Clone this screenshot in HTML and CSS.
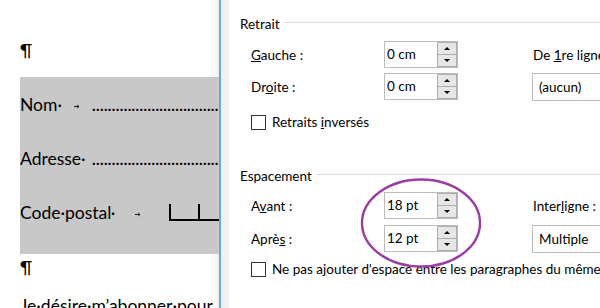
FILE: index.html
```html
<!DOCTYPE html>
<html lang="fr">
<head>
<meta charset="utf-8">
<title>Paragraphe</title>
<link rel="stylesheet" href="styles.css">
</head>
<body>
<div class="app">
  <div class="doc">
    <p class="para pil-top">¶</p>
    <div class="shade">
      <div class="line">
        <span class="lab lab-short">Nom·<svg class="tab" viewBox="0 0 6 5" width="6" height="5"><path d="M0 2.5H5M3.2 1L5 2.5 3.2 4" fill="none" stroke="#000" stroke-width="0.9"/></svg></span>
        <span class="leader">..................................................</span>
      </div>
      <div class="line">
        <span class="lab lab-short">Adresse·</span>
        <span class="leader">..................................................</span>
      </div>
      <div class="line">
        <span class="lab lab-long">Code·postal·<svg class="tab tab-code" viewBox="0 0 6 5" width="6" height="5"><path d="M0 2.5H5M3.2 1L5 2.5 3.2 4" fill="none" stroke="#000" stroke-width="0.9"/></svg></span>
        <span class="postal"><span class="postal-cell"></span></span>
      </div>
    </div>
    <p class="para pil-bottom">¶</p>
    <p class="para sentence">Je·désire·m’abonner·pour</p>
  </div>

  <div class="dialog">
    <div class="strip"></div>
    <div class="content">
      <section class="group group-retrait">
        <div class="legend"><span>Retrait</span><span class="rule"></span></div>
        <div class="grid">
          <span class="label"><u>G</u>auche :</span>
          <div class="spin"><span class="val">0 cm</span><span class="btns"><span class="btn"><i class="up"></i></span><span class="btn"><i class="down"></i></span></span></div>
          <span class="gap"></span>
          <span class="label label-right">De <u>1</u>re ligne :</span>

          <span class="label">Dr<u>o</u>ite :</span>
          <div class="spin"><span class="val">0 cm</span><span class="btns"><span class="btn"><i class="up"></i></span><span class="btn"><i class="down"></i></span></span></div>
          <span class="gap"></span>
          <div class="select">(aucun)</div>
        </div>
        <label class="check check-retrait"><span class="box"></span><span class="check-text">Retraits <u>i</u>nversés</span></label>
      </section>

      <section class="group group-espace">
        <div class="legend"><span>Espacement</span><span class="rule"></span></div>
        <div class="grid grid-espace">
          <span class="label">A<u>v</u>ant :</span>
          <div class="spin"><span class="val">18 pt</span><span class="btns"><span class="btn"><i class="up"></i></span><span class="btn"><i class="down"></i></span></span></div>
          <span class="gap"></span>
          <span class="label label-right">Inter<u>l</u>igne :</span>

          <span class="label">Aprè<u>s</u> :</span>
          <div class="spin"><span class="val">12 pt</span><span class="btns"><span class="btn"><i class="up"></i></span><span class="btn"><i class="down"></i></span></span></div>
          <span class="gap"></span>
          <div class="select">Multiple</div>
        </div>
        <label class="check check-espace"><span class="box"></span><span class="check-text">Ne pas a<u>j</u>outer d'espace entre les paragraphes du même style</span></label>
      </section>
    </div>
  </div>

  <svg class="circle" width="124" height="92" viewBox="0 0 124 92"><ellipse cx="62" cy="46" rx="59" ry="43.5" fill="none" stroke="#9a3ea3" stroke-width="2.4"/></svg>
</div>
</body>
</html>
```
FILE: styles.css
```css
html, body {
  margin: 0;
  padding: 0;
  width: 600px;
  height: 308px;
  overflow: hidden;
  background: #fff;
}

.app {
  position: relative;
  display: flex;
  width: 600px;
  height: 308px;
  overflow: hidden;
}

/* ---------- Word document ---------- */
.doc {
  width: 219px;
  flex: none;
  padding-top: 41px;
  font-family: Lato, "Open Sans", sans-serif;
  font-size: 17.5px;
  color: #000;
  background: linear-gradient(to right, #fff 0, #fff 214px, #ececec 219px);
  overflow: hidden;
}

.para {
  margin: 0;
  padding-left: 20px;
  line-height: 20px;
  white-space: nowrap;
}

.pil-top { margin-bottom: 16px; }
.pil-bottom { margin-top: 4px; }
.sentence { margin-top: 18px; }

.shade {
  margin-left: 20px;
  background: #c8c8c8;
  padding: 1px 0 14px;
}

.line {
  display: flex;
  align-items: baseline;
  height: 54px;
  line-height: 54px;
  white-space: nowrap;
  overflow: hidden;
}

.lab { flex: none; }
.lab-short { width: 72px; }
.lab-long { width: 149px; }

.tab {
  margin-left: 12px;
  vertical-align: 2px;
}
.tab-code { margin-left: 20px; }

.leader {
  flex: 1;
  overflow: hidden;
  letter-spacing: 0.4px;
  font-size: 15px;
  font-weight: 700;
}

.postal {
  display: inline-block;
  width: 50px;
  height: 17px;
  border-left: 2px solid #000;
  border-bottom: 2px solid #000;
  box-sizing: border-box;
  vertical-align: baseline;
  position: relative;
  top: 2px;
}

.postal-cell {
  display: block;
  margin-left: 27px;
  height: 100%;
  border-left: 2px solid #000;
}

/* ---------- Dialog ---------- */
.dialog {
  flex: 1;
  display: flex;
  border-left: 2px solid #68a8e4;
  font-family: Lato, "Noto Sans", sans-serif;
  font-size: 13.5px;
  color: #000;
}

.strip {
  width: 8px;
  flex: none;
  background: #f0f0f0;
}

.content {
  flex: 1;
  background: #fff;
  padding: 15px 0 0 11px;
  overflow: hidden;
}

.legend {
  display: flex;
  align-items: center;
  height: 18px;
  line-height: 18px;
  white-space: nowrap;
}

.rule {
  flex: 1;
  height: 1px;
  background: #dcdcdc;
  margin: -3px 0 0 4px;
}

.grid {
  display: grid;
  grid-template-columns: 133px 74px 74px 120px;
  grid-auto-rows: 27px;
  row-gap: 5px;
  align-items: center;
  padding-left: 11px;
  margin-top: 8px;
  white-space: nowrap;
}

.grid-espace {
  margin-top: 7px;
  row-gap: 6px;
}

.label {
  line-height: 18px;
}

.label-right { padding-left: 1px; }

.spin {
  display: flex;
  height: 27px;
  box-sizing: border-box;
  border: 1px solid #bcbcbc;
  background: #fff;
}

.val {
  flex: 1;
  padding-left: 2px;
  line-height: 25px;
}

.btns {
  display: flex;
  flex-direction: column;
  width: 20px;
}

.btn {
  flex: 1;
  display: flex;
  align-items: center;
  justify-content: center;
  background: #e6e6e6;
  border: 1px solid #adadad;
}
.btn + .btn { border-top: none; }

.up, .down {
  width: 0;
  height: 0;
  border-left: 3px solid transparent;
  border-right: 3px solid transparent;
}
.up { border-bottom: 3px solid #000; }
.down { border-top: 3px solid #000; }

.select {
  height: 28px;
  box-sizing: border-box;
  border: 1px solid #bcbcbc;
  padding-left: 6px;
  line-height: 26px;
  background: #fff;
}

.check {
  display: flex;
  align-items: center;
  gap: 6px;
  padding-left: 11px;
  white-space: nowrap;
  line-height: 18px;
}

.check-retrait { margin-top: 13px; }
.check-espace { margin-top: 8px; }

.box {
  width: 15px;
  height: 15px;
  box-sizing: border-box;
  border: 1px solid #333;
  background: #fff;
  flex: none;
}

.group-espace { margin-top: 36px; }

/* ---------- Annotation ---------- */
.circle {
  position: absolute;
  left: 359px;
  top: 177px;
}
```
